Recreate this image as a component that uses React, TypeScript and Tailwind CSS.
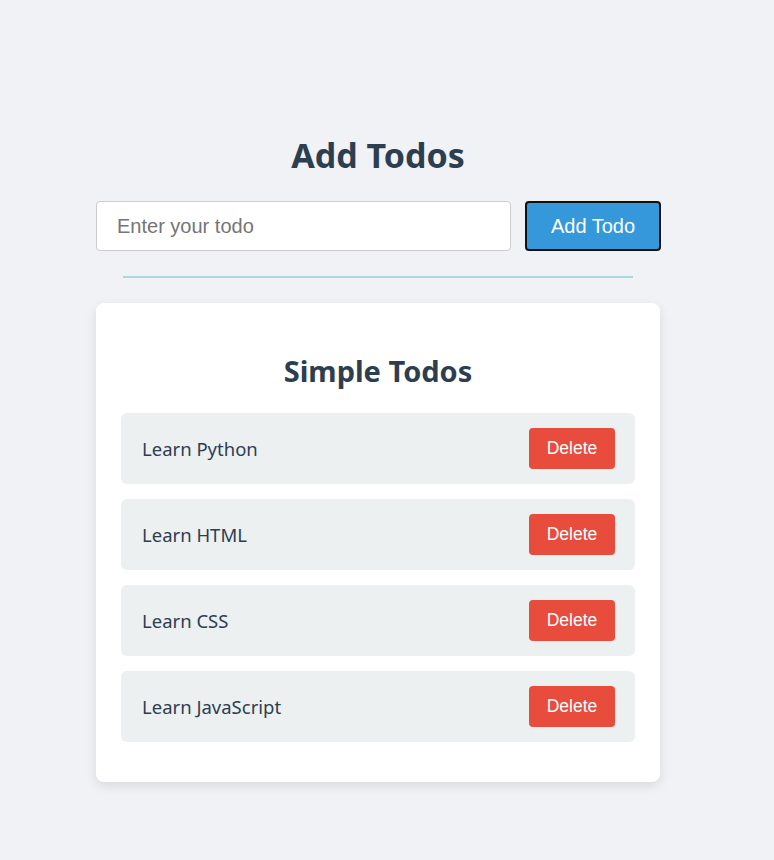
export default function App() {
  const todos = ["Learn Python", "Learn HTML", "Learn CSS", "Learn JavaScript"];
  const seg = { fontFamily: '"Noto Sans", "Open Sans", sans-serif' };
  const arial = { fontFamily: '"Liberation Sans", Arial, sans-serif' };
  return (
    <div className="min-h-[860px] w-full bg-[#f0f2f5]">
      <div className="flex w-[756px] justify-center pt-[133px]">
        <div className="flex w-[564px] flex-col">
          <h1 className="text-center text-[34px] font-bold leading-[44px] text-[#2c3e50]" style={seg}>
            Add Todos
          </h1>
          <div className="mt-[24px] flex items-center gap-[14px]">
            <input
              placeholder="Enter your todo"
              className="h-[50px] w-[415px] shrink-0 rounded-[4px] border border-[#cccccc] bg-white px-[20px] text-[20px] text-[#333] placeholder:text-[#757575] outline-none"
              style={arial}
            />
            <button
              className="h-[50px] w-[136px] shrink-0 rounded-[4px] border-2 border-[#111] bg-[#3498db] text-[20px] text-white"
              style={arial}
            >
              Add Todo
            </button>
          </div>
          <div className="mx-auto mt-[25px] h-[2px] w-[510px] bg-[#a8dadc]" />
          <div className="mt-[25px] rounded-[8px] bg-white px-[25px] pt-[48px] pb-[40px] shadow-[0_4px_12px_rgba(0,0,0,0.1)]">
            <h2 className="text-center text-[29px] font-bold leading-[39px] text-[#2c3e50]" style={seg}>
              Simple Todos
            </h2>
            <div className="mt-[23px] flex flex-col gap-[15px]">
              {todos.map((t) => (
                <div
                  key={t}
                  className="flex h-[71px] items-center justify-between rounded-[6px] bg-[#ecf0f1] pl-[21px] pr-[20px]"
                >
                  <span className="text-[18.5px] text-[#2c3e50]" style={seg}>
                    {t}
                  </span>
                  <button
                    className="h-[41px] w-[86px] rounded-[4px] bg-[#e74c3c] text-[17.5px] text-white"
                    style={arial}
                  >
                    Delete
                  </button>
                </div>
              ))}
            </div>
          </div>
        </div>
      </div>
    </div>
  );
}
